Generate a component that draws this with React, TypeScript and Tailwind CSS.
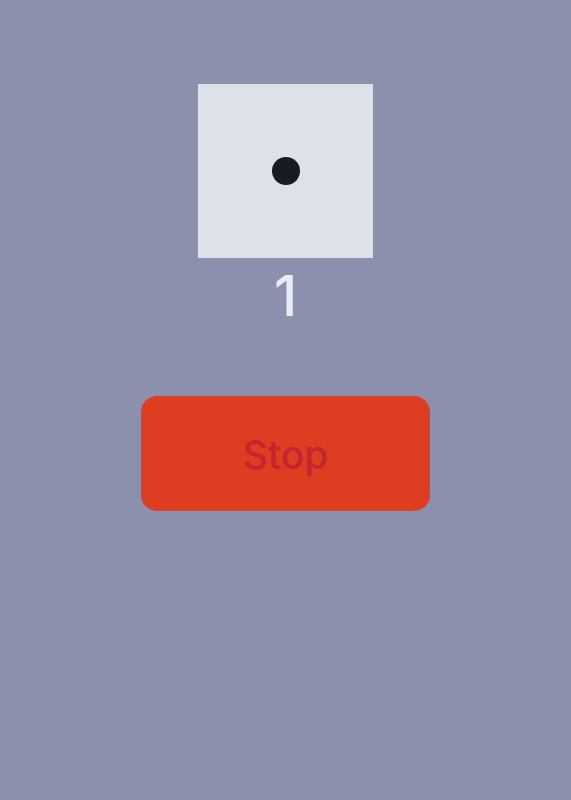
export default function App() {
  return (
    <div className="min-h-[800px] w-full bg-[#8b91ac] flex flex-col items-center pt-[84px] font-['Inter',sans-serif]">
      <div className="w-[175px] h-[174px] bg-[#dce1ea] flex items-center justify-center">
        <div className="w-[28px] h-[28px] rounded-full bg-[#181c20]" />
      </div>
      <div className="mt-[3px] h-[70px] text-[56px] leading-[70px] font-medium text-[#e9edf5]">1</div>
      <button className="mt-[65px] w-[289px] h-[115px] rounded-[16px] bg-[#df3d22] text-[#c3262f] text-[39px] font-medium pt-[4px]">
        Stop
      </button>
    </div>
  )
}
